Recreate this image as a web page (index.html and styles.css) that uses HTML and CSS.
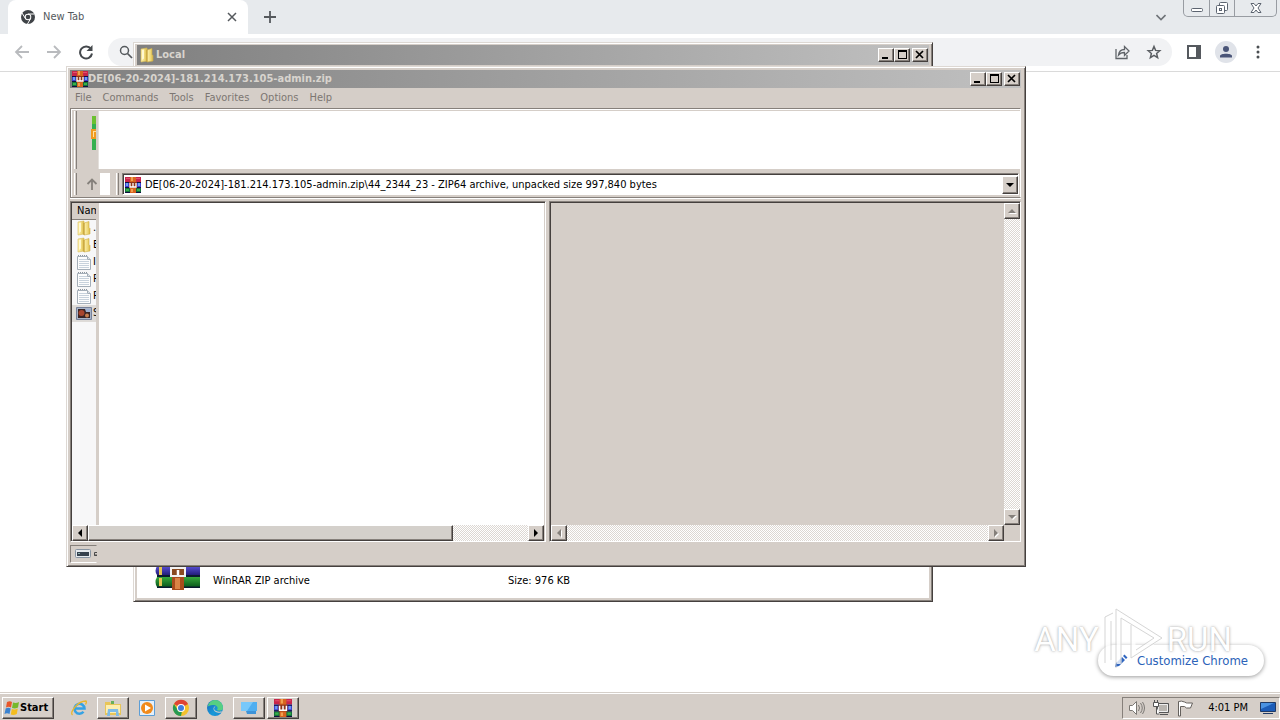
FILE: index.html
```html
<!DOCTYPE html>
<html lang="en">
<head>
<meta charset="utf-8">
<title>New Tab</title>
<link rel="stylesheet" href="styles.css">
</head>
<body>
<svg class="defs" aria-hidden="true">
  <defs>
    <linearGradient id="gold" x1="0" x2="1"><stop offset="0" stop-color="#fff3b0"/><stop offset=".6" stop-color="#efd878"/><stop offset="1" stop-color="#d8b848"/></linearGradient>
    <linearGradient id="purple" x1="0" y1="0" x2="0" y2="1"><stop offset="0" stop-color="#5a50d8"/><stop offset="1" stop-color="#231d7a"/></linearGradient>
    <linearGradient id="green" x1="0" y1="0" x2="0" y2="1"><stop offset="0" stop-color="#37a83c"/><stop offset="1" stop-color="#0a5a1c"/></linearGradient>
    <linearGradient id="edge" x1="0" y1="0" x2="1" y2="1"><stop offset="0" stop-color="#1b66b8"/><stop offset=".6" stop-color="#1698d8"/><stop offset="1" stop-color="#1c86d0"/></linearGradient>
    <symbol id="rar" viewBox="0 0 16 16">
      <path fill="#c8254a" d="M0 0h16v5H0z"/><path fill="#e2506c" d="M1 1h4v1H1zM11 1h4v1h-4z"/>
      <path fill="#3a3fd0" d="M0 5h16v6H0z"/><path fill="#6fa0f0" d="M1 6h2v3H1zM13 6h2v3h-2z"/>
      <path fill="#14703a" d="M0 11h16v5H0z"/><path fill="#38b04a" d="M1 12h3v2H1zM12 12h3v2h-3z"/>
      <path fill="#101040" d="M0 5h16v1H0zM0 10h16v1H0zM0 15h16v1H0z"/>
      <path fill="#d8641e" d="M5 0h6v16H5z"/><path fill="#f0a050" d="M6 0h2v4H6zM6 12h2v3H6z"/>
      <path fill="#8e3418" d="M4 5h8v6H4z"/><path fill="none" stroke="#fff" stroke-width="1.300" d="M5 6v4h6V6M8 6v4"/>
    </symbol>
    <symbol id="folder" viewBox="0 0 16 16">
      <path fill="url(#gold)" stroke="#d8bc58" stroke-width=".6" d="M2 2l6-1v13l-6 1z"/><path fill="url(#gold)" stroke="#d0b048" stroke-width=".6" d="M8 3l5-1.500v6l1 1V14l-6 1z"/><path fill="#c29c34" d="M7.500 3h1v12h-1z"/><path fill="#fff8d0" d="M3 3l2-.5v9L3 13z"/>
    </symbol>
    <symbol id="doc" viewBox="0 0 16 16">
      <path fill="#fdfdfd" stroke="#a4aeb8" d="M1.500 2.500h10l3 3v10h-13z"/><path stroke="#8d959d" stroke-dasharray="1 1" d="M2 1.500h10"/><path stroke="#c8d2dc" d="M3 5.500h8M3 7.500h10M3 9.500h10M3 11.500h10M3 13.500h10"/><path fill="#dde3e8" stroke="#a4aeb8" d="M11.500 2.500v3h3"/>
    </symbol>
  </defs>
</svg>

<main class="chrome">
  <header class="tabstrip">
    <div class="tab">
      <svg class="i14" viewBox="0 0 14 14"><circle cx="7" cy="7" r="7" fill="#3f4347"/><circle cx="7" cy="7" r="3.300" fill="#fff"/><circle cx="7" cy="7" r="2.300" fill="#3f4347"/><path stroke="#fff" d="M7 4h6.500M4.400 8.500L1 3M9.600 8.500L6.500 14" fill="none"/></svg>
      <span class="tab-title">New Tab</span>
      <button class="plain" aria-label="Close tab"><svg class="i10" viewBox="0 0 10 10"><path stroke="#55595d" stroke-width="1.500" d="M1 1l8 8M9 1l-8 8"/></svg></button>
    </div>
    <button class="plain newtab" aria-label="New tab"><svg class="i12" viewBox="0 0 12 12"><path stroke="#55595d" stroke-width="1.800" d="M6 0v12M0 6h12"/></svg></button>
    <button class="plain search-tabs" aria-label="Search tabs"><svg class="i10" viewBox="0 0 10 10"><path fill="none" stroke="#6f7378" stroke-width="1.600" d="M.5 3l4.500 4.500L9.500 3"/></svg></button>
    <div class="caption">
      <button aria-label="Minimize"><svg width="14" height="14" viewBox="0 0 14 14"><rect x="1.500" y="7.500" width="11" height="3" rx="1" fill="#fff" stroke="#5c6470"/></svg></button>
      <button aria-label="Restore"><svg width="14" height="14" viewBox="0 0 14 14"><g fill="#fff" stroke="#5c6470"><rect x="4.500" y="1.500" width="8" height="8" rx="1"/><rect x="1.500" y="4.500" width="8" height="8" rx="1"/><rect x="4.500" y="7.500" width="2" height="2"/></g></svg></button>
      <button aria-label="Close"><svg width="14" height="14" viewBox="0 0 14 14"><path fill="#fff" stroke="#5c6470" d="M2 2.500h3L7 5l2-2.500h3L9 7l3 4.500H9L7 9l-2 2.500H2L5 7z"/></svg></button>
    </div>
  </header>
  <div class="toolbar">
    <button class="plain" aria-label="Back"><svg class="i16" viewBox="0 0 16 16"><path fill="none" stroke="#b9bbbe" stroke-width="1.800" d="M15 8H2M8 2L2 8l6 6"/></svg></button>
    <button class="plain" aria-label="Forward"><svg class="i16" viewBox="0 0 16 16"><path fill="none" stroke="#b9bbbe" stroke-width="1.800" d="M1 8h13M8 2l6 6-6 6"/></svg></button>
    <button class="plain" aria-label="Reload"><svg class="i16" viewBox="0 0 16 16"><path fill="none" stroke="#45494d" stroke-width="2" d="M13 5a6 6 0 1 0 1 4.500"/><path fill="#45494d" d="M14.500 1v6h-6z"/></svg></button>
    <div class="omnibox">
      <svg class="i14" viewBox="0 0 14 14"><circle cx="5.500" cy="5.500" r="4" fill="none" stroke="#55595d" stroke-width="1.500"/><path stroke="#55595d" stroke-width="1.700" d="M8.500 8.500l4.500 4.500"/></svg>
      <input type="text" aria-label="Address and search bar">
      <button class="plain" aria-label="Share"><svg class="i16" viewBox="0 0 16 16"><path fill="none" stroke="#5f6368" stroke-width="1.300" d="M2 5v9.500h11V11M4.500 11c.5-4 2.500-5.500 6-5.500V2.500L15 7l-4.500 4.500V8.500c-3 0-4.500.5-6 2.500z"/></svg></button>
      <button class="plain" aria-label="Bookmark"><svg class="i16" viewBox="0 0 16 16"><path fill="none" stroke="#5a5e62" stroke-width="1.500" d="M8 2.500l1.600 3.900 4.200.3-3.200 2.800 1 4.100L8 11.400l-3.600 2.200 1-4.100L2.200 6.700l4.200-.3z"/></svg></button>
    </div>
    <button class="plain" aria-label="Side panel"><svg class="i14" viewBox="0 0 14 14"><path fill="none" stroke="#55595e" stroke-width="2" d="M1 1h12v12H1z"/><path fill="#55595e" d="M9 1h4v12H9z"/></svg></button>
    <button class="plain profile" aria-label="Profile"><svg width="22" height="22" viewBox="0 0 22 22"><circle cx="11" cy="11" r="11" fill="#e0e3e9"/><circle cx="11" cy="8" r="3" fill="#4a5578"/><path fill="#4a5578" d="M5 16.500v-1.500c0-3 12-3 12 0v1.500z"/></svg></button>
    <button class="plain" aria-label="Menu"><svg class="i14" viewBox="0 0 14 14"><g fill="#4a4e52"><circle cx="7" cy="2" r="1.500"/><circle cx="7" cy="7" r="1.500"/><circle cx="7" cy="12" r="1.500"/></g></svg></button>
  </div>
  <section class="page">
    <button class="customize"><svg class="i14" viewBox="0 0 14 14"><path fill="#2f65c0" d="M1 13l1-4 6-6 3 3-6 6zM9 2l1.500-1.500 3 3L12 5z"/></svg>Customize Chrome</button>
  </section>
</main>

<section class="win win-back">
  <div class="titlebar">
    <svg class="i16"><use href="#folder"/></svg><h2>Local</h2>
    <div class="ctl">
      <button aria-label="Minimize"><svg viewBox="0 0 12 10"><path fill="#000" d="M2 7h6v2H2z"/></svg></button>
      <button aria-label="Maximize"><svg viewBox="0 0 12 10"><path fill="#000" d="M2 0h9v9H2zM3 2v6h7V2z" fill-rule="evenodd"/></svg></button>
      <button class="x" aria-label="Close"><svg viewBox="0 0 12 10"><path stroke="#000" stroke-width="1.700" d="M2 1l7 7M9 1L2 8"/></svg></button>
    </div>
  </div>
  <div class="explorer">
    <div class="details">
      <svg class="books" viewBox="0 0 46 24">
        <path fill="url(#purple)" d="M2 0h43v9H2Q-1 5 2 0z"/><path fill="url(#green)" d="M2 11h43v10H2Q-1 16 2 11z"/>
        <path fill="#0b1a30" d="M2 9h43v2H2zM2 20.500h43V22H2z"/>
        <path fill="#e4c452" d="M4 0h3v9H4zM4 12h3v8H4z"/>
        <path fill="#a94c1c" d="M17 10h12v14H17z"/><path fill="#d98445" d="M20 12h5v11h-5z"/>
        <path fill="#8a4a20" d="M17 0h12v10H17z"/><path fill="none" stroke="#f2f2f2" stroke-width="2" d="M16 0v10h14V0M17 2h12"/><path stroke="#fff" stroke-width="2.500" d="M23 4v5"/>
      </svg>
      <span>WinRAR ZIP archive</span>
      <span class="size">Size: 976 KB</span>
    </div>
  </div>
</section>

<section class="win win-front">
  <div class="titlebar">
    <svg class="i16"><use href="#rar"/></svg><h1>DE[06-20-2024]-181.214.173.105-admin.zip</h1>
    <div class="ctl">
      <button aria-label="Minimize"><svg viewBox="0 0 12 10"><path fill="#000" d="M2 7h6v2H2z"/></svg></button>
      <button aria-label="Maximize"><svg viewBox="0 0 12 10"><path fill="#000" d="M2 0h9v9H2zM3 2v6h7V2z" fill-rule="evenodd"/></svg></button>
      <button class="x" aria-label="Close"><svg viewBox="0 0 12 10"><path stroke="#000" stroke-width="1.700" d="M2 1l7 7M9 1L2 8"/></svg></button>
    </div>
  </div>
  <nav class="menu"><button>File</button><button>Commands</button><button>Tools</button><button>Favorites</button><button>Options</button><button>Help</button></nav>
  <div class="rebar">
    <div class="band">
      <div class="band-left"><i class="grip"></i><svg class="sliver" viewBox="0 0 5 34"><path fill="#35b050" d="M1 0h4v34H1z"/><path fill="#6cc030" d="M1 0h4v8H1z"/><path fill="#f09a20" d="M0 13h5v10H0z"/><path fill="#ffe0a0" d="M2 15h3v1H2zM2 15h1v6H2z"/></svg></div>
      <div class="band-blank"></div>
    </div>
    <div class="band-address">
      <i class="grip"></i>
      <button class="plain up" aria-label="Up one level"><svg class="i12" viewBox="0 0 12 12"><path fill="none" stroke="#85807b" stroke-width="1.800" d="M6 12V2M1.500 6L6 1.500 10.500 6"/></svg></button>
      <i class="gap"></i>
      <i class="grip"></i>
      <div class="combo">
        <svg class="i16"><use href="#rar"/></svg>
        <select aria-label="Archive path"><option>DE[06-20-2024]-181.214.173.105-admin.zip\44_2344_23 - ZIP64 archive, unpacked size 997,840 bytes</option></select>
        <span class="btn3d drop"><svg viewBox="0 0 8 8"><path fill="#000" d="M0 2h8L4 6z"/></svg></span>
      </div>
    </div>
  </div>
  <div class="panes">
    <div class="pane pane-files">
      <div class="files-body">
        <div class="files-col">
          <table>
            <thead><tr><th>Name</th></tr></thead>
            <tbody>
              <tr><td><svg class="i16"><use href="#folder"/></svg>..</td></tr>
              <tr><td><svg class="i16"><use href="#folder"/></svg>E</td></tr>
              <tr><td><svg class="i16"><use href="#doc"/></svg>I</td></tr>
              <tr><td><svg class="i16"><use href="#doc"/></svg>R</td></tr>
              <tr><td><svg class="i16"><use href="#doc"/></svg>R</td></tr>
              <tr class="sel"><td><svg class="i16" viewBox="0 0 16 16"><path fill="#a9b4c8" stroke="#76819a" d="M.5 2.500h15v12H.5z"/><path fill="#3a2424" d="M2 4h12v9H2z"/><circle cx="5.500" cy="8" r="3" fill="#a8452e"/><circle cx="11" cy="10.500" r="2" fill="#c88050"/><path fill="#9fb0d0" d="M9 4h5v3h-4z"/></svg>S</td></tr>
            </tbody>
          </table>
        </div>
        <div class="files-blank"></div>
      </div>
      <div class="hscroll">
        <button class="btn3d" aria-label="Scroll left"><svg viewBox="0 0 8 8"><path fill="#000" d="M6 0v8L2 4z"/></svg></button>
        <div class="track"><div class="thumb"></div></div>
        <button class="btn3d" aria-label="Scroll right"><svg viewBox="0 0 8 8"><path fill="#000" d="M2 0v8l4-4z"/></svg></button>
      </div>
    </div>
    <div class="pane pane-view">
      <div class="view-blank"></div>
      <div class="vscroll">
        <button class="btn3d" disabled aria-label="Scroll up"><svg viewBox="0 0 8 8"><path fill="#fff" d="M1 7h8L5 3z"/><path fill="#85807b" d="M0 6h8L4 2z"/></svg></button>
        <div class="track"></div>
        <button class="btn3d" disabled aria-label="Scroll down"><svg viewBox="0 0 8 8"><path fill="#fff" d="M1 3h8L5 7z"/><path fill="#85807b" d="M0 2h8L4 6z"/></svg></button>
      </div>
      <div class="hscroll">
        <button class="btn3d" disabled aria-label="Scroll left"><svg viewBox="0 0 8 8"><path fill="#fff" d="M7 1v8L3 5z"/><path fill="#85807b" d="M6 0v8L2 4z"/></svg></button>
        <div class="track"></div>
        <button class="btn3d" disabled aria-label="Scroll right"><svg viewBox="0 0 8 8"><path fill="#fff" d="M3 1v8l4-4z"/><path fill="#85807b" d="M2 0v8l4-4z"/></svg></button>
      </div>
    </div>
  </div>
  <footer class="status"><span class="cell"><svg viewBox="0 0 22 12"><rect x=".5" y="1.500" width="15" height="8" rx="1" fill="#e6eaee" stroke="#8794a2"/><path fill="#37424e" d="M2 4h12v4H2z"/><path fill="#8aa" d="M3 5h2v1H3z"/><path fill="none" stroke="#4a4a4a" d="M22 4.500h-2.500v3H22M19 7h3"/></svg></span></footer>
</section>

<div class="watermark" aria-hidden="true">
  <span>ANY</span>
  <svg viewBox="0 0 62 64"><path fill="none" stroke="#fff" stroke-width="5" d="M6 52V11l8-4M17 56V5l40 25-26 17V20"/><path fill="none" stroke="#ccc" d="M3 55V9l8-4M9 52V13M14 60V1l46 29-31 20V17M19 56V10l33 20-18 12"/></svg>
  <span>RUN</span>
</div>

<footer class="taskbar">
  <button class="start"><svg class="i16" viewBox="0 0 16 16"><path fill="#e8562a" d="M3 2q3-1.500 5 0L7 7.500q-2.500-1.500-5 0z"/><path fill="#76b82a" d="M9 2.500q3 1 6-.5l-1 5.500q-3 1.500-6 .5z"/><path fill="#3b82d0" d="M1.700 8.500q2.500-1.500 5 0L5.500 14q-2.500-1.500-5 0z"/><path fill="#f4bd20" d="M7.800 9q3 1 6-.5l-1 5.500q-3 1.500-6 .5z"/></svg>Start</button>
  <div class="tasks">
    <button class="task" aria-label="Internet Explorer"><svg class="i18" viewBox="0 0 18 18"><path fill="none" stroke="#35a2e4" stroke-width="2.500" d="M5 9.500h9.500a5 5 0 1 0-1 3.300"/><path fill="none" stroke="#e9b62c" stroke-width="1.300" d="M2.500 16Q0 14 5 8T16 2q1 1-.5 3.500"/></svg></button>
    <button class="task open" aria-label="Explorer"><svg class="i18" viewBox="0 0 18 18"><path fill="#e8c558" d="M1 3h5l1 2h10v11H1z"/><path fill="#fdeeb0" d="M2 6h14v8H2z"/><path fill="#68b05a" d="M7 2h3v3H7z"/><path fill="#7fbbe6" d="M4 10h10l1 7h-3v-4H6v4H3z"/></svg></button>
    <button class="task" aria-label="Media Player"><svg class="i18" viewBox="0 0 18 18"><path fill="#e5f0fa" stroke="#5d9ed6" d="M1.500 1.500h15v15h-15z"/><circle cx="9" cy="9" r="6" fill="#f18a1b"/><path fill="#fff" d="M7 5.500l6 3.500-6 3.500z"/></svg></button>
    <button class="task open" aria-label="Chrome"><svg class="i18" viewBox="0 0 18 18"><circle cx="9" cy="9" r="8" fill="#f3c12c"/><path fill="#de4334" d="M9 9L2 5a8 8 0 0 1 14 0z"/><path fill="#279a52" d="M9 17A8 8 0 0 1 2 5l5 8 3-1z"/><circle cx="9" cy="9" r="4" fill="#fff"/><circle cx="9" cy="9" r="3" fill="#3f7ee0"/></svg></button>
    <button class="task" aria-label="Edge"><svg class="i18" viewBox="0 0 18 18"><circle cx="9" cy="9" r="8" fill="url(#edge)"/><path fill="#56cf82" d="M9 1a8 8 0 0 1 8 8c0 3-4 3-6 2 2-3-1-5-4-5S2 7 1.500 8A8 8 0 0 1 9 1z"/><path fill="#d4d0c8" d="M9.500 7.500c-3 2-1 6 6 5q1 0 1.500.5c-4 2-9 0-9.500-3 0-2 1-2.500 2-2.500z"/></svg></button>
    <button class="task open" aria-label="Desktop"><svg class="i18" viewBox="0 0 18 18"><path fill="#4faef0" d="M1 3h16v9H1z"/><path fill="#78c8fa" d="M1 3h12l-6 9H1z"/><path fill="#3d93d8" d="M6 12h10v3H7z"/></svg></button>
    <button class="task open" aria-label="WinRAR"><svg class="i18"><use href="#rar"/></svg></button>
  </div>
  <div class="tray">
    <svg class="i18" viewBox="0 0 18 18"><path fill="#fff" stroke="#7b7874" d="M1.500 6.500h3l4-4v13l-4-4h-3z"/><path fill="none" stroke="#7b7874" d="M10.500 6q2 3 0 6M12.500 4q3.500 5 0 10M14.500 3q4 6 0 12"/></svg>
    <svg class="i18" viewBox="0 0 18 18"><path fill="#b9b5b0" stroke="#555" d="M5.500 4.500h11v9h-11z"/><path fill="none" stroke="#eee" d="M6.500 5.500h9v7h-9z"/><path stroke="#555" d="M8 15.500h8"/><path fill="#fff" stroke="#555" d="M1.500 3.500h5v4h-5zM2.500 1v2M5.500 1v2M4.500 8v7h3"/></svg>
    <svg class="i18" viewBox="0 0 18 18"><path fill="#fff" stroke="#65615d" d="M2.500 17V2.500q3-1 6 .5t3 1h5l-2 5h-4l-2-1.500h-4V17z"/></svg>
    <time>4:01 PM</time>
    <svg class="i16" viewBox="0 0 16 16"><path fill="#1c5cb8" stroke="#203a66" d="M.5 2.500h15v9H.5z"/><path fill="#4a92e2" d="M1 3h13L1 9z"/><path fill="#203a66" d="M3 13h10v1H3z"/></svg>
  </div>
</footer>
</body>
</html>
```
FILE: styles.css
```css
* { box-sizing: border-box; }
:root { --face: #d5cec8; --shade: #86807b; --dark: #45403e; }
body {
  margin: 0; min-height: 100vh; display: flex; flex-direction: column; overflow: hidden;
  font: 11px/14px "DejaVu Sans Condensed", "DejaVu Sans", sans-serif; color: #000; background: #fff;
}
svg { display: block; flex: none; }
button, input, select { font: inherit; color: inherit; margin: 0; padding: 0; border: 0; background: none; }
h1, h2 { margin: 0; font-size: 11px; line-height: 14px; }
.defs { position: absolute; width: 0; height: 0; }
.i10 { width: 10px; height: 10px; }
.i12 { width: 12px; height: 12px; }
.i14 { width: 14px; height: 14px; }
.i16 { width: 16px; height: 16px; }
.i18 { width: 18px; height: 18px; }
.plain { display: flex; align-items: center; justify-content: center; }

/* Browser */
.chrome { flex: 1; display: flex; flex-direction: column; }
.tabstrip { display: flex; align-items: center; height: 34px; padding: 0 3px 0 8px; background: #e7eaed; }
.tab { display: flex; align-items: center; gap: 8px; width: 240px; height: 34px; padding: 0 11px 0 13px; background: #fff; border-radius: 8px 8px 0 0; color: #55595d; }
.tab-title { flex: 1; }
.newtab { margin-left: 16px; }
.search-tabs { margin-left: auto; margin-right: 17px; }
.caption { display: flex; align-self: flex-start; height: 17px; border: 1px solid #989ca2; border-top: 0; border-radius: 0 0 5px 5px; }
.caption button { display: flex; align-items: center; justify-content: center; width: 25px; }
.caption button + button { border-left: 1px solid #989ca2; }
.caption button:last-child { width: 42px; }
.toolbar { display: flex; align-items: center; height: 38px; padding: 0 15px 2px 14px; gap: 16px; border-bottom: 1px solid #dadada; }
.omnibox { flex: 1; display: flex; align-items: center; gap: 16px; height: 28px; margin-left: -2px; margin-right: -1px; padding: 0 10px 0 11px; border-radius: 14px; background: #f1f2f4; }
.omnibox input { flex: 1; min-width: 0; }
.profile { margin: 0 -2px; }
.page { flex: 1; display: flex; align-items: flex-end; justify-content: flex-end; padding: 16px; }
.customize { display: flex; align-items: center; gap: 9px; height: 31px; padding: 0 16px; border-radius: 16px; background: #fff; color: #2b62b8; font-size: 13px; box-shadow: 0 1px 4px rgba(0, 0, 0, .4); }

/* Desktop windows */
.win { position: absolute; display: flex; flex-direction: column; padding: 2px; background: var(--face); border: 1px solid; border-color: #ddd8d3 var(--dark) var(--dark) #ddd8d3; box-shadow: inset 1px 1px #fff, inset -1px -1px var(--shade); }
.win-back { left: 133px; top: 42px; width: 62.5%; height: 560px; }
.win-front { left: 66px; top: 66px; width: 75%; height: 501px; padding: 3px 4px 3px 3px; }
.titlebar { display: flex; align-items: center; height: 18px; flex: none; padding: 0 1px 0 2px; background: linear-gradient(to right, #808080, #c0c0c0); color: #d8d4ce; }
.win-back .titlebar { margin: 0 1px 1px; height: 20px; }
.win-back h2 { margin-left: 1px; }
.ctl { display: flex; margin-left: auto; }
.ctl button, .btn3d { display: flex; align-items: center; justify-content: center; width: 16px; height: 16px; background: var(--face); border: 1px solid; border-color: #fff var(--dark) var(--dark) #fff; box-shadow: inset -1px -1px var(--shade); }
.ctl button { height: 14px; }
.ctl .x { margin-left: 2px; }
.ctl svg { width: 12px; height: 10px; }
.btn3d { flex: none; }
.btn3d svg { width: 8px; height: 8px; overflow: visible; }
.explorer { flex: 1; display: flex; align-items: flex-end; margin: 0 1px 1px; background: #fff; }
.details {
  display: flex; align-items: flex-end; width: 100%; height: 32px; padding: 0 0 8px 18px;
  background: linear-gradient(#222, #222) 95px 0 / 4px 1px, linear-gradient(#222, #222) 164px 0 / 3px 1px, linear-gradient(#222, #222) 313px 0 / 2px 1px, linear-gradient(#222, #222) 405px 0 / 2px 1px, linear-gradient(#222, #222) 421px 0 / 2px 1px, linear-gradient(#222, #222) 613px 0 / 2px 1px, linear-gradient(#222, #222) 628px 0 / 2px 1px;
  background-repeat: no-repeat;
}
.details span { margin-bottom: 2px; margin-left: 12px; width: 283px; }
.details .size { width: auto; }
.books { width: 46px; height: 24px; }

/* Archive window */
.menu { display: flex; align-items: center; gap: 11px; height: 20px; flex: none; padding: 0 5px; color: #7c7672; }
.rebar { display: flex; flex-direction: column; flex: none; border: 1px solid var(--shade); border-right-color: #fff; box-shadow: inset 1px 1px #fff, 0 1px #fff; padding: 2px 0 1px 3px; }
.band { display: flex; height: 58px; }
.band-left { display: flex; align-items: flex-start; justify-content: space-between; width: 23px; padding-right: 1px; }
.grip { width: 3px; align-self: stretch; border-left: 1px solid #fff; border-right: 1px solid var(--shade); }
.sliver { width: 5px; height: 34px; margin-top: 5px; }
.band-blank { flex: 1; background: #fff; border-left: 1px solid #e4e0dc; margin-left: 1px; }
.band-address { display: flex; align-items: center; height: 27px; padding: 4px 1px 1px 0; }
.up { width: 21px; padding-left: 9px; }
.gap { align-self: stretch; width: 10px; margin: 0 6px 0 2px; background: #fff; }
.combo { flex: 1; display: flex; align-items: center; height: 22px; margin-left: 3px; padding: 1px 0 0 2px; background: #fff; border: 1px solid; border-color: var(--shade) #fff #fff var(--shade); box-shadow: inset 1px 1px var(--dark); }
.combo select { flex: 1; min-width: 0; height: 18px; margin-left: 4px; appearance: none; outline: 0; }
.drop { height: 18px; pointer-events: none; }
.panes { flex: 1; min-height: 0; display: grid; grid-template-columns: 476fr 472fr; gap: 3px; margin-top: 3px; }
.pane { min-width: 0; border: 1px solid; border-color: var(--shade) #fff #fff var(--shade); box-shadow: inset 1px 1px var(--dark); padding: 1px 0 0 1px; }
.pane-files { display: flex; flex-direction: column; padding-right: 1px; }
.files-body { flex: 1; min-height: 0; display: flex; background: var(--face); }
.files-col { width: 24px; overflow: hidden; background: #f7f7f8; }
.files-col table { width: 100px; border-collapse: collapse; }
.files-col th { height: 16px; padding: 0 0 0 5px; text-align: left; font-weight: normal; background: var(--face); border-bottom: 1px solid var(--shade); }
.files-col td { display: flex; align-items: center; gap: 1px; height: 17px; padding: 0 0 0 4px; }
.files-col .sel td { background: #dedbd8; }
.files-blank { flex: 1; margin-left: 3px; background: #fff; }
.hscroll { display: flex; height: 16px; }
.track { flex: 1; background: repeating-conic-gradient(#fff 0 25%, #dcd7d2 0 50%) 0 0 / 2px 2px; }
.thumb { width: 83%; height: 100%; background: #d4d0cb; border: 1px solid; border-color: #fff var(--dark) var(--dark) #fff; box-shadow: inset -1px -1px var(--shade); }
.pane-view { display: grid; grid-template-columns: 1fr 16px; grid-template-rows: 1fr 16px; background: var(--face); }
.vscroll { display: flex; flex-direction: column; }
.status { display: flex; height: 21px; flex: none; padding-top: 3px; }
.cell { width: 27px; padding: 2px 0 0 4px; border: 1px solid; border-color: var(--shade) transparent #fff var(--shade); }
.cell svg { width: 22px; height: 12px; }

/* Recording overlay */
.watermark { position: absolute; right: 48px; bottom: 48px; display: flex; align-items: center; gap: 3px; font: 33px/64px Roboto, "Liberation Sans", sans-serif; color: #fff; text-shadow: 0 0 3px #999, 0 0 1px #bbb; opacity: .8; pointer-events: none; }
.watermark svg { width: 62px; height: 64px; }

/* Taskbar */
.taskbar { display: flex; align-items: center; height: 28px; padding: 2px 0 0 2px; background: var(--face); border-top: 1px solid #d5cfc9; box-shadow: inset 0 1px #fff; }
.start, .task.open { background: var(--face); border: 1px solid; border-color: #fff var(--dark) var(--dark) #fff; box-shadow: inset -1px -1px var(--shade); }
.start { display: flex; align-items: center; height: 22px; width: 52px; padding-left: 1px; font-weight: bold; }
.tasks { display: flex; gap: 2px; margin-left: 9px; }
.task { display: flex; align-items: center; justify-content: center; width: 32px; height: 22px; }
.tray { display: flex; align-items: center; gap: 6px; margin-left: auto; height: 22px; padding: 0 3px 0 5px; border: 1px solid; border-color: var(--shade) #fff #fff var(--shade); }
.tray time { margin: 0 6px 0 8px; }
```
